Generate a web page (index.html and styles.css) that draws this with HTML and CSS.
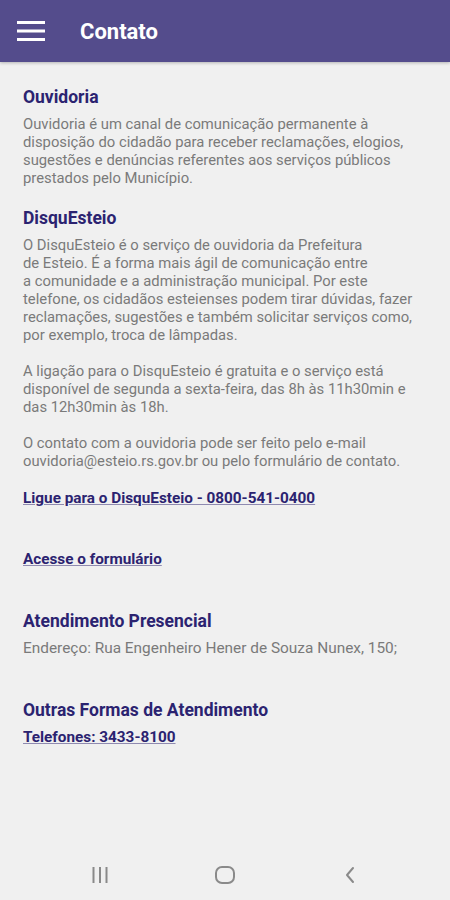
FILE: index.html
```html
<!DOCTYPE html>
<html lang="pt-BR">
<head>
    <meta charset="UTF-8">
    <meta name="viewport" content="width=device-width, initial-scale=1.0">
    <title>Contato</title>
    <link rel="stylesheet" href="styles.css">
</head>
<body>
    <header class="topbar">
        <svg class="menu-icon" width="28" height="22" viewBox="0 0 28 22">
            <rect x="0" y="1" width="28" height="3" fill="#fff"/>
            <rect x="0" y="9.5" width="28" height="3" fill="#fff"/>
            <rect x="0" y="18" width="28" height="3" fill="#fff"/>
        </svg>
        <h1>Contato</h1>
    </header>

    <main class="content">
        <!-- Ouvidoria -->
        <section class="block">
            <h2>Ouvidoria</h2>
            <p>Ouvidoria é um canal de comunicação permanente à disposição do cidadão para receber reclamações, elogios, sugestões e denúncias referentes aos serviços públicos prestados pelo Município.</p>
        </section>

        <!-- DisquEsteio -->
        <section class="block">
            <h2>DisquEsteio</h2>
            <p>O DisquEsteio é o serviço de ouvidoria da Prefeitura<br>
            de Esteio. É a forma mais ágil de comunicação entre<br>
            a comunidade e a administração municipal. Por este<br>
            telefone, os cidadãos esteienses podem tirar dúvidas, fazer reclamações, sugestões e também solicitar serviços como, por exemplo, troca de lâmpadas.</p>
            <p>A ligação para o DisquEsteio é gratuita e o serviço está disponível de segunda a sexta-feira, das 8h às 11h30min e das 12h30min às 18h.</p>
            <p>O contato com a ouvidoria pode ser feito pelo e-mail ouvidoria@esteio.rs.gov.br ou pelo formulário de contato.</p>
        </section>

        <a class="link link-phone" href="#">Ligue para o DisquEsteio - 0800-541-0400</a>
        <a class="link link-form" href="#">Acesse o formulário</a>

        <!-- Presencial -->
        <section class="block-spaced">
            <h2>Atendimento Presencial</h2>
            <p class="address">Endereço: Rua Engenheiro Hener de Souza Nunex, 150;</p>
        </section>

        <!-- Outras formas -->
        <section class="block-spaced">
            <h2>Outras Formas de Atendimento</h2>
            <a class="link link-tel" href="#">Telefones: 3433-8100</a>
        </section>
    </main>

    <nav class="navbar">
        <div class="nav-item">
            <svg width="18" height="18" viewBox="0 0 18 18">
                <rect x="1.5" y="1" width="2" height="16" fill="#8a8a8a"/>
                <rect x="8" y="1" width="2" height="16" fill="#8a8a8a"/>
                <rect x="14.5" y="1" width="2" height="16" fill="#8a8a8a"/>
            </svg>
        </div>
        <div class="nav-item">
            <svg width="22" height="22" viewBox="0 0 22 22">
                <rect x="2" y="3" width="18" height="16" rx="6" fill="none" stroke="#8a8a8a" stroke-width="2"/>
            </svg>
        </div>
        <div class="nav-item">
            <svg width="18" height="18" viewBox="0 0 18 18">
                <path d="M12 2 L6 9 L12 16" fill="none" stroke="#8a8a8a" stroke-width="2" stroke-linecap="round" stroke-linejoin="round"/>
            </svg>
        </div>
    </nav>
</body>
</html>
```

FILE: styles.css
```css
/* Global */
body {
    font-family: Roboto, "Noto Sans", sans-serif;
    margin: 0;
    padding: 0;
    background-color: #f0f0f0;
    color: #7a7a7a;
    min-height: 100vh;
    display: flex;
    flex-direction: column;
}

/* Top bar */
.topbar {
    height: 62px;
    background: #544c8c;
    display: flex;
    align-items: center;
    padding: 0 17px;
    box-shadow: 0 1px 3px rgba(0, 0, 0, 0.25);
}

.topbar h1 {
    margin: 0 0 0 35px;
    color: #fff;
    font-size: 22px;
    font-weight: 700;
}

.menu-icon {
    display: block;
}

/* Content */
.content {
    padding: 25px 23px 0;
}

.content h2 {
    margin: 0;
    font-size: 17.5px;
    line-height: 20px;
    font-weight: 700;
    color: #2b2370;
}

.content p {
    margin: 8px 0 0;
    font-size: 14.8px;
    line-height: 18px;
}

.content p + p {
    margin-top: 18px;
}

.block + .block {
    margin-top: 21px;
}

.block-spaced {
    margin-top: 43px;
}

.content .address {
    font-size: 15.4px;
}

/* Links */
.link {
    display: block;
    color: #2b2370;
    font-size: 15.3px;
    font-weight: 700;
    line-height: 18px;
    text-decoration: underline;
    text-decoration-color: #8f8ab0;
}

.link-phone {
    margin-top: 19px;
}

.link-form {
    margin-top: 43px;
}

.link-tel {
    margin-top: 8px;
}

/* Android navigation */
.navbar {
    margin-top: auto;
    height: 50px;
    display: flex;
    justify-content: center;
    align-items: center;
}

.nav-item {
    width: 125px;
    display: flex;
    justify-content: center;
}
```
